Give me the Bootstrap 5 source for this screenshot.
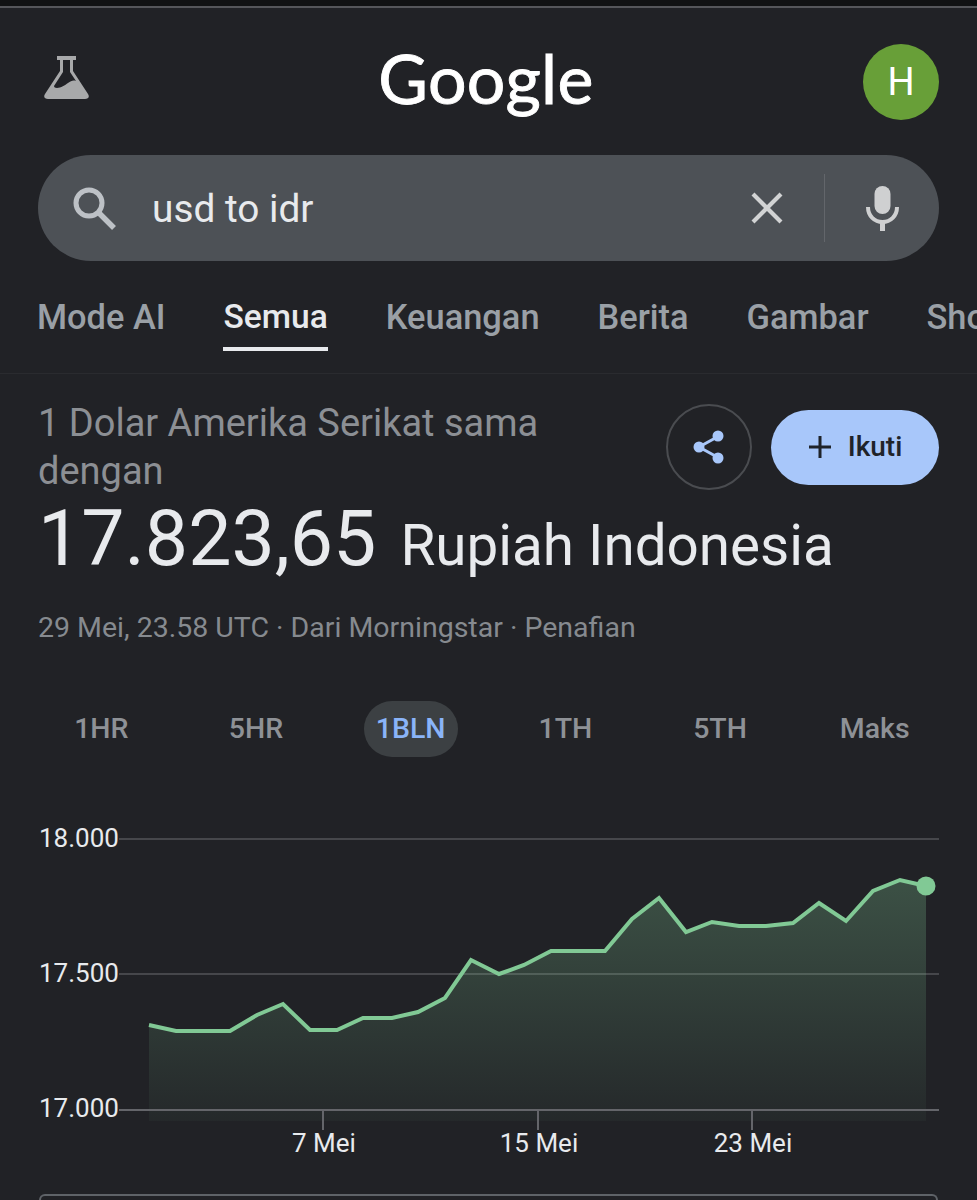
<!DOCTYPE html>
<html lang="id">
<head>
    <meta charset="UTF-8">
    <meta name="viewport" content="width=device-width, initial-scale=1.0">
    <title>usd to idr - Google</title>
    <link href="https://cdn.jsdelivr.net/npm/bootstrap@5.3.0/dist/css/bootstrap.min.css" rel="stylesheet">
    <style>
        html, body {
            height: 1200px;
            overflow: hidden;
        }

        body {
            background: #212226;
            font-family: Roboto, "Liberation Sans", sans-serif;
        }

        .status-strip {
            height: 8px;
            background: #111213;
            border-bottom: 2px solid #55565a;
        }

        .top-head {
            display: grid;
            grid-template-columns: 1fr auto 1fr;
            align-items: center;
            padding: 36px 38px 0;
        }

        .flask-icon {
            margin: -8px 0 0 6px;
        }

        .logo-text {
            margin: -8px 0 0 -5px;
            font-family: Lato, sans-serif;
            font-size: 68px;
            line-height: 76px;
            font-weight: 400;
            letter-spacing: .3px;
            -webkit-text-stroke: .9px #fff;
            color: #fff;
        }

        .avatar-h {
            width: 76px;
            height: 76px;
            background: #689f38;
            color: #fff;
            font-size: 38px;
        }

        .search-pill {
            height: 106px;
            margin: 35px 38px 0;
            padding: 0 40px 0 34px;
            background: #4d5156;
            border-radius: 53px;
        }

        .search-text {
            margin-left: 36px;
            font-size: 38.8px;
            line-height: 50px;
            padding-top: 2px;
            color: #e8eaed;
        }

        .mic-rule {
            width: 1px;
            height: 68px;
            background: #63666b;
            margin: 0 41px;
        }

        .tab-strip {
            height: 113px;
            padding: 26px 0 0 37px;
            gap: 58px;
            flex-wrap: nowrap;
            overflow: hidden;
            border-bottom: 1px solid #2a2b2f;
        }

        .tab-item {
            height: 64px;
            padding-top: 10px;
            font-size: 34.4px;
            line-height: 40px;
            font-weight: 500;
            color: #9aa0a6;
            white-space: nowrap;
            border-bottom: 4px solid transparent;
        }

        .tab-item.is-on {
            font-size: 33.6px;
            color: #e8eaed;
            border-bottom-color: #e8eaed;
        }

        .quote-area {
            padding: 25px 38px 0;
        }

        .quote-title {
            width: 560px;
            font-size: 38px;
            line-height: 48px;
            color: #8c8f94;
        }

        .quote-actions {
            margin-top: 5px;
        }

        .share-btn {
            width: 86px;
            height: 86px;
            padding: 0;
            border: 2px solid #4a4c50;
            background: transparent;
        }

        .follow-btn {
            width: 168px;
            height: 75px;
            margin-left: 19px;
            background: #a8c7fa;
            color: #1f2329;
            font-size: 28px;
            font-weight: 500;
        }

        .quote-value {
            margin-top: 2px;
            line-height: 84px;
            color: #e8eaed;
            white-space: nowrap;
        }

        .quote-value b {
            font-size: 77px;
            font-weight: 400;
        }

        .quote-value span {
            margin-left: 24px;
            font-size: 56.6px;
        }

        .quote-meta {
            margin-top: 8px;
            font-size: 28.5px;
            line-height: 36px;
            color: #868a8f;
        }

        .range-strip {
            margin: 55px 25px 0 24px;
        }

        .range-item {
            flex: 1 1 0;
            text-align: center;
            font-size: 28.5px;
            font-weight: 500;
            line-height: 56px;
            color: #8e9196;
        }

        .range-item span {
            display: inline-block;
            padding: 0 12px;
            border-radius: 28px;
        }

        .range-item.is-on span {
            background: #3c4043;
            color: #8ab4f8;
        }

        .chart-box {
            display: block;
            margin-top: 44px;
        }

        .chart-box text {
            font-family: Roboto, sans-serif;
            font-size: 26px;
            fill: #e8eaed;
        }

        .next-card {
            height: 6px;
            margin: 0 39px;
            border: 2px solid #5f6368;
            border-bottom: 0;
            border-radius: 22px 22px 0 0;
        }
    </style>
</head>
<body>
    <div class="status-strip"></div>

    <!-- Header -->
    <div class="top-head">
        <svg class="flask-icon" width="45" height="44" viewBox="0 0 45 44">
            <path fill="#a8a9aa" fill-rule="evenodd" d="M13 0h19v4h-3v11l15 23c2 3 0 5-3 5H4c-3 0-5-2-3-5l15-23V4h-3zM19 4v12L10 30c0 1 1 2 3 2 4 0 8-3 11-5s5-3 8-2L26 16V4z"/>
        </svg>
        <div class="logo-text">Google</div>
        <div class="d-flex justify-content-end">
            <div class="avatar-h rounded-circle d-flex align-items-center justify-content-center">H</div>
        </div>
    </div>

    <!-- Search -->
    <div class="search-pill d-flex align-items-center">
        <svg width="44" height="44" viewBox="0 0 44 44" class="flex-shrink-0">
            <circle cx="17" cy="17" r="13" fill="none" stroke="#bdc1c6" stroke-width="5"/>
            <path d="M27 27l15 15" stroke="#bdc1c6" stroke-width="5.5"/>
        </svg>
        <div class="search-text flex-grow-1">usd to idr</div>
        <svg width="32" height="32" viewBox="0 0 32 32" class="flex-shrink-0">
            <path d="M2 2l28 28M30 2L2 30" stroke="#d2d3d4" stroke-width="4.2"/>
        </svg>
        <div class="mic-rule"></div>
        <svg width="33" height="45" viewBox="0 0 33 45" class="flex-shrink-0">
            <rect x="8.5" y="0" width="16" height="28" rx="8" fill="#cfd0d1"/>
            <path d="M2 21c0 9 6.500 15 14.500 15S31 30 31 21" fill="none" stroke="#cfd0d1" stroke-width="4"/>
            <path d="M16.500 36v9" stroke="#cfd0d1" stroke-width="5"/>
        </svg>
    </div>

    <!-- Tabs -->
    <div class="tab-strip d-flex">
        <div class="tab-item">Mode AI</div>
        <div class="tab-item is-on">Semua</div>
        <div class="tab-item">Keuangan</div>
        <div class="tab-item">Berita</div>
        <div class="tab-item">Gambar</div>
        <div class="tab-item">Shopping</div>
    </div>

    <!-- Kurs -->
    <div class="quote-area">
        <div class="d-flex justify-content-between align-items-start">
            <div class="quote-title">1 Dolar Amerika Serikat sama dengan</div>
            <div class="quote-actions d-flex align-items-center flex-shrink-0">
                <button class="btn share-btn rounded-circle d-flex align-items-center justify-content-center">
                    <svg width="32" height="34" viewBox="0 0 32 34">
                        <path d="M26 6L6 17l20 11" fill="none" stroke="#a8c7fa" stroke-width="3"/>
                        <circle cx="25" cy="6" r="5.5" fill="#a8c7fa"/>
                        <circle cx="6" cy="17" r="5.5" fill="#a8c7fa"/>
                        <circle cx="25" cy="28" r="5.5" fill="#a8c7fa"/>
                    </svg>
                </button>
                <button class="btn follow-btn rounded-pill d-flex align-items-center justify-content-center gap-3 border-0 p-0">
                    <svg width="24" height="24" viewBox="0 0 24 24">
                        <path d="M12 1v22M1 12h22" stroke="#1f2329" stroke-width="3"/>
                    </svg>
                    Ikuti
                </button>
            </div>
        </div>
        <div class="quote-value"><b>17.823,65</b><span>Rupiah Indonesia</span></div>
        <div class="quote-meta">29 Mei, 23.58 UTC · Dari Morningstar · Penafian</div>
    </div>

    <!-- Rentang -->
    <div class="range-strip d-flex">
        <div class="range-item"><span>1HR</span></div>
        <div class="range-item"><span>5HR</span></div>
        <div class="range-item is-on"><span>1BLN</span></div>
        <div class="range-item"><span>1TH</span></div>
        <div class="range-item"><span>5TH</span></div>
        <div class="range-item"><span>Maks</span></div>
    </div>

    <!-- Grafik, koordinat svg = koordinat halaman -->
    <svg class="chart-box" width="977" height="393" viewBox="0 800 977 393">
        <defs>
            <linearGradient id="areaFill" x1="0" y1="0" x2="0" y2="1">
                <stop offset="0" stop-color="#81c995" stop-opacity=".28"/>
                <stop offset="1" stop-color="#81c995" stop-opacity=".04"/>
            </linearGradient>
        </defs>
        <path d="M119 838H939M119 973H939" stroke="#46474b" stroke-width="2"/>
        <path fill="url(#areaFill)" d="M149 1024L176 1030 203 1030 230 1030 257 1014 283 1003 310 1029 337 1029 363 1017 392 1017 418 1011 445 997 471 959 499 973 524 964 551 950 578 950 605 950 632 918 659 897 686 931 712 921 739 925 766 925 793 922 819 902 846 920 873 890 900 879 926 885V1120H149Z"/>
        <path d="M119 1109H939M323 1109v20M538 1109v20M752 1109v20" stroke="#64656a" stroke-width="2"/>
        <path fill="none" stroke="#81c995" stroke-width="4" d="M149 1024L176 1030 203 1030 230 1030 257 1014 283 1003 310 1029 337 1029 363 1017 392 1017 418 1011 445 997 471 959 499 973 524 964 551 950 578 950 605 950 632 918 659 897 686 931 712 921 739 925 766 925 793 922 819 902 846 920 873 890 900 879 926 885"/>
        <circle cx="926" cy="885" r="9.5" fill="#81c995"/>
        <text x="39" y="846">18.000</text>
        <text x="39" y="981">17.500</text>
        <text x="39" y="1116">17.000</text>
        <text x="324" y="1151" text-anchor="middle">7 Mei</text>
        <text x="539" y="1151" text-anchor="middle">15 Mei</text>
        <text x="753" y="1151" text-anchor="middle">23 Mei</text>
    </svg>

    <div class="next-card"></div>
    <script src="https://cdn.jsdelivr.net/npm/bootstrap@5.3.0/dist/js/bootstrap.bundle.min.js"></script>
</body>
</html>
